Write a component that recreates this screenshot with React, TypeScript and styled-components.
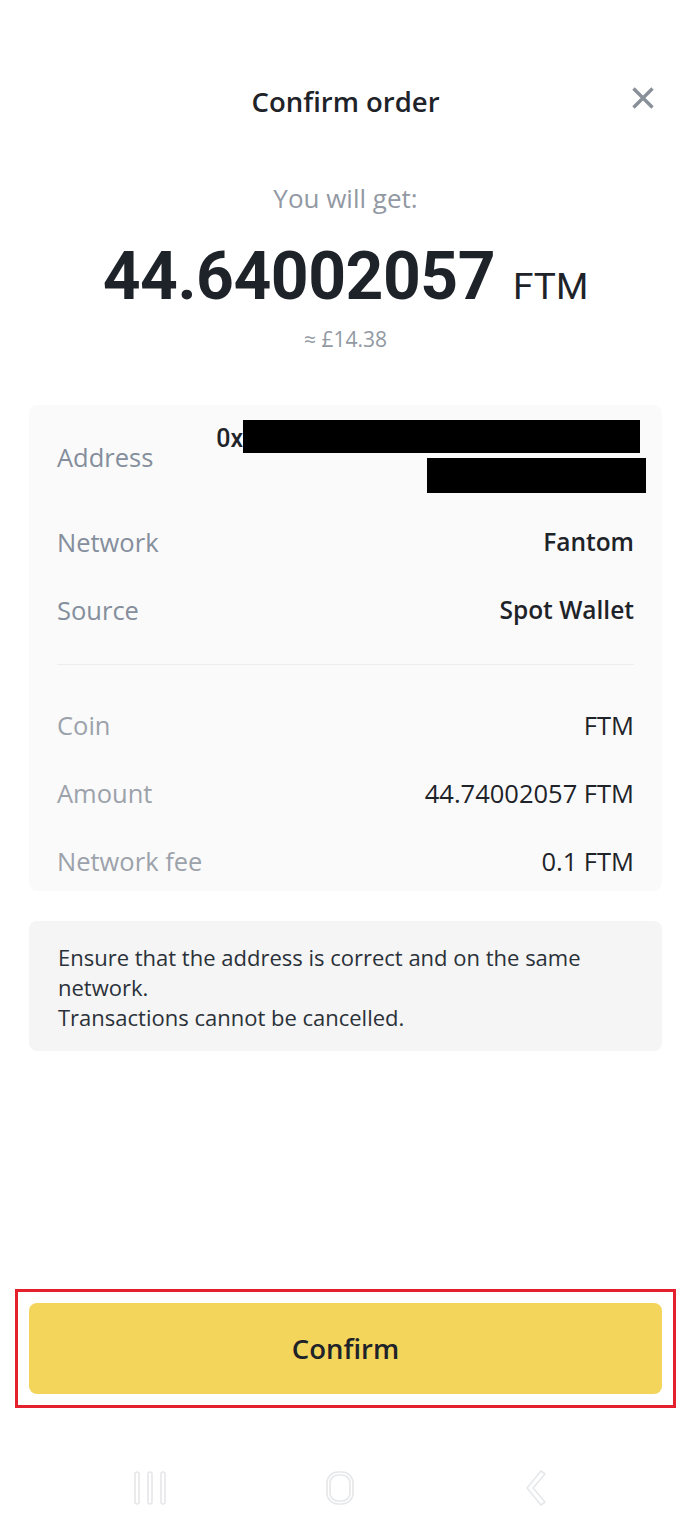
import React from "react";
import styled, { createGlobalStyle } from "styled-components";

const Global = createGlobalStyle`
  html, body { margin: 0; padding: 0; background: #ffffff; }
  body { font-family: "Open Sans", "Noto Sans", sans-serif; -webkit-font-smoothing: antialiased; }
  * { box-sizing: border-box; }
`;

const Page = styled.div`
  width: 691px;
  height: 1536px;
  display: flex;
  flex-direction: column;
  background: #fff;
`;

const Header = styled.div`
  display: grid;
  grid-template-columns: 1fr auto 1fr;
  align-items: center;
  height: 62px;
  margin-top: 70px;
  padding: 0 29px;
`;

const Title = styled.h1`
  grid-column: 2;
  margin: 0;
  font-size: 27.5px;
  font-weight: 600;
  color: #1e2329;
`;

const Close = styled.button`
  grid-column: 3;
  justify-self: end;
  margin-right: 4px;
  margin-top: -6px;
  width: 30px;
  height: 30px;
  border: 0;
  background: none;
  padding: 0;
  display: flex;
  align-items: center;
  justify-content: center;
`;

const Summary = styled.div`
  display: flex;
  flex-direction: column;
  align-items: center;
  margin-top: 51px;
`;

const Muted = styled.div<{ $size: number }>`
  font-size: ${(p) => p.$size}px;
  color: #9299a3;
  line-height: 1.2;
`;

const AmountRow = styled.div`
  display: flex;
  align-items: baseline;
  gap: 18px;
  margin-top: 24px;
  margin-bottom: 12px;
  color: #1e2329;
  font-family: Roboto, "Open Sans", sans-serif;
`;

const Big = styled.span`
  font-size: 66px;
  font-weight: 700;
  letter-spacing: -0.5px;
`;

const Unit = styled.span`
  font-size: 37px;
  font-weight: 400;
`;

const Card = styled.div<{ $bg: string }>`
  margin: 0 29px;
  background: ${(p) => p.$bg};
  border-radius: 8px;
`;

const DetailCard = styled(Card)`
  margin-top: 53px;
  padding: 1px 28px 0 28px;
`;

const AddressRow = styled.div`
  display: flex;
  justify-content: space-between;
  align-items: center;
  height: 102px;
`;

const AddrBlock = styled.div`
  display: flex;
  flex-direction: column;
  align-items: flex-end;
  gap: 5px;
  margin-right: -12px;
  margin-top: -2px;
`;

const AddrLine = styled.div`
  display: flex;
  align-items: flex-start;
  margin-right: 6px;
`;

const Prefix = styled.span`
  font-family: Roboto, sans-serif;
  font-size: 25px;
  font-weight: 500;
  line-height: 1;
  color: #1e2329;
  margin-top: 6px;
`;

const Redact = styled.div<{ $w: number; $h: number }>`
  width: ${(p) => p.$w}px;
  height: ${(p) => p.$h}px;
  background: #000;
`;

const Row = styled.div`
  display: flex;
  justify-content: space-between;
  align-items: center;
  height: 68px;

  &:last-child {
    height: 64px;
    align-items: flex-start;
    padding-top: 15px;
  }
`;

const Label = styled.span<{ $light?: boolean }>`
  font-size: 25.5px;
  line-height: 38px;
  color: ${(p) => (p.$light ? "#9ca2ab" : "#848e9c")};
`;

const Value = styled.span<{ $strong?: boolean }>`
  font-size: ${(p) => (p.$strong ? 24.5 : 25.5)}px;
  line-height: 38px;
  font-weight: ${(p) => (p.$strong ? 600 : 400)};
  color: #1e2329;
`;

const Divider = styled.hr`
  border: 0;
  border-top: 1px solid #ebedef;
  margin: 20px 0 26px;
`;

const Notice = styled(Card)`
  margin-top: 30px;
  padding: 21px 29px 19px;
  font-size: 22px;
  line-height: 30px;
  color: #2b3139;
`;

const Spacer = styled.div`
  flex: 1;
`;

const Highlight = styled.div`
  margin: 0 15px;
  border: 3px solid #e3202b;
  padding: 11px;
`;

const ConfirmButton = styled.button`
  width: 100%;
  height: 91px;
  border: 0;
  border-radius: 8px;
  background: #f3d55b;
  font-family: inherit;
  font-size: 27.5px;
  font-weight: 600;
  color: #1e2329;
`;

const NavBar = styled.div`
  height: 128px;
  display: grid;
  grid-template-columns: repeat(3, 1fr);
  align-items: center;
  justify-items: center;
  padding: 32px 60px 0 54px;
`;

const X = () => (
  <svg width="24" height="24" viewBox="0 0 24 24" fill="none">
    <path d="M2.5 2.5L21.5 21.5M21.5 2.5L2.5 21.5" stroke="#8a9099" strokeWidth="3.4" />
  </svg>
);

const NavLines = () => (
  <svg width="34" height="36" viewBox="0 0 34 36" fill="none" stroke="#e6e7e9" strokeWidth="1.6">
    <rect x="2" y="2" width="4" height="32" rx="2" />
    <rect x="15" y="2" width="4" height="32" rx="2" />
    <rect x="28" y="2" width="4" height="32" rx="2" />
  </svg>
);

const NavHome = () => (
  <svg width="36" height="36" viewBox="0 0 36 36" fill="none" stroke="#e6e7e9" strokeWidth="1.6">
    <rect x="3" y="2" width="26" height="32" rx="11" />
    <rect x="6" y="5" width="20" height="26" rx="8" />
  </svg>
);

const NavBack = () => (
  <svg width="28" height="38" viewBox="0 0 28 38" fill="none" stroke="#e6e7e9" strokeWidth="1.6">
    <path d="M20 2 L6 19 L20 36 L24 33 L12 19 L24 5 Z" strokeLinejoin="round" />
  </svg>
);

export default function App() {
  return (
    <Page>
      <Global />
      <Header>
        <Title>Confirm order</Title>
        <Close aria-label="close"><X /></Close>
      </Header>
      <Summary>
        <Muted $size={26}>You will get:</Muted>
        <AmountRow>
          <Big>44.64002057</Big>
          <Unit>FTM</Unit>
        </AmountRow>
        <Muted $size={21}>≈ £14.38</Muted>
      </Summary>

      <DetailCard $bg="#fafafa">
        <AddressRow>
          <Label>Address</Label>
          <AddrBlock>
            <AddrLine>
              <Prefix>0x</Prefix>
              <Redact $w={397} $h={33} />
            </AddrLine>
            <Redact $w={219} $h={35} />
          </AddrBlock>
        </AddressRow>
        <Row><Label>Network</Label><Value $strong>Fantom</Value></Row>
        <Row><Label>Source</Label><Value $strong>Spot Wallet</Value></Row>
        <Divider />
        <Row><Label $light>Coin</Label><Value>FTM</Value></Row>
        <Row><Label $light>Amount</Label><Value>44.74002057 FTM</Value></Row>
        <Row><Label $light>Network fee</Label><Value>0.1 FTM</Value></Row>
      </DetailCard>

      <Notice $bg="#f5f5f5">
        Ensure that the address is correct and on the same network.
        <br />
        Transactions cannot be cancelled.
      </Notice>

      <Spacer />
      <Highlight>
        <ConfirmButton>Confirm</ConfirmButton>
      </Highlight>
      <NavBar>
        <NavLines />
        <NavHome />
        <NavBack />
      </NavBar>
    </Page>
  );
}
